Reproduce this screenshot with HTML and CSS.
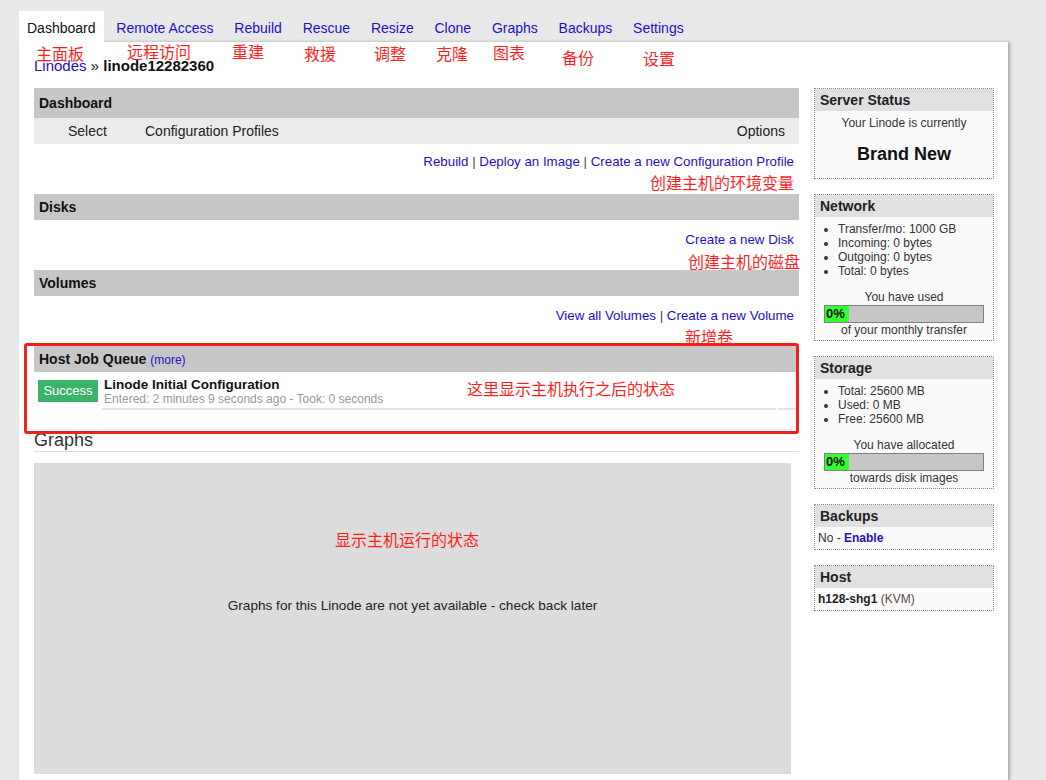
FILE: index.html
```html
<!DOCTYPE html>
<html lang="en">
<head>
<meta charset="utf-8">
<title>Linode Dashboard</title>
<link rel="stylesheet" href="styles.css">
</head>
<body>
<div class="page">
  <nav class="tabs">
    <a class="tab active">Dashboard</a>
    <a class="tab">Remote Access</a>
    <a class="tab">Rebuild</a>
    <a class="tab">Rescue</a>
    <a class="tab">Resize</a>
    <a class="tab">Clone</a>
    <a class="tab">Graphs</a>
    <a class="tab">Backups</a>
    <a class="tab">Settings</a>
  </nav>
  <div class="panel">
    <div class="crumbs"><a class="link">Linodes</a> » <b>linode12282360</b></div>
    <div class="cols">
      <main class="main">
        <section>
          <div class="sec-head tall">Dashboard</div>
          <div class="sub-head">
            <span class="col-select">Select</span>
            <span class="col-profiles">Configuration Profiles</span>
            <span class="col-options">Options</span>
          </div>
          <div class="links"><a class="link">Rebuild</a> <span class="sep">|</span> <a class="link">Deploy an Image</a> <span class="sep">|</span> <a class="link">Create a new Configuration Profile</a></div>
        </section>
        <section>
          <div class="sec-head">Disks</div>
          <div class="links low"><a class="link">Create a new Disk</a></div>
        </section>
        <section>
          <div class="sec-head">Volumes</div>
          <div class="links low"><a class="link">View all Volumes</a> <span class="sep">|</span> <a class="link">Create a new Volume</a></div>
        </section>
        <section>
          <div class="sec-head">Host Job Queue <a class="link more">(more)</a></div>
          <div class="job-row">
            <div class="job-status"><span class="badge">Success</span></div>
            <div class="job-info">
              <div class="job-title">Linode Initial Configuration</div>
              <div class="job-meta">Entered: 2 minutes 9 seconds ago - Took: 0 seconds</div>
            </div>
            <div class="job-end"></div>
          </div>
        </section>
        <h2 class="graphs-title">Graphs</h2>
        <div class="graph-box">Graphs for this Linode are not yet available - check back later</div>
      </main>
      <aside class="side">
        <div class="box">
          <div class="box-head">Server Status</div>
          <div class="box-body center">
            <div class="small">Your Linode is currently</div>
            <div class="status">Brand New</div>
          </div>
        </div>
        <div class="box">
          <div class="box-head">Network</div>
          <div class="box-body">
            <ul class="list">
              <li>Transfer/mo: 1000 GB</li>
              <li>Incoming: 0 bytes</li>
              <li>Outgoing: 0 bytes</li>
              <li>Total: 0 bytes</li>
            </ul>
            <div class="meter-label">You have used</div>
            <div class="bar"><div class="fill">0%</div></div>
            <div class="meter-foot">of your monthly transfer</div>
          </div>
        </div>
        <div class="box">
          <div class="box-head">Storage</div>
          <div class="box-body">
            <ul class="list">
              <li>Total: 25600 MB</li>
              <li>Used: 0 MB</li>
              <li>Free: 25600 MB</li>
            </ul>
            <div class="meter-label">You have allocated</div>
            <div class="bar"><div class="fill">0%</div></div>
            <div class="meter-foot">towards disk images</div>
          </div>
        </div>
        <div class="box">
          <div class="box-head">Backups</div>
          <div class="box-body line">No - <a class="link strong">Enable</a></div>
        </div>
        <div class="box">
          <div class="box-head">Host</div>
          <div class="box-body line"><b class="host">h128-shg1</b> <span class="kvm">(KVM)</span></div>
        </div>
      </aside>
    </div>
  </div>

  <div class="frame"></div>
  <span class="note n-dash">主面板</span>
  <span class="note n-remote">远程访问</span>
  <span class="note n-rebuild">重建</span>
  <span class="note n-rescue">救援</span>
  <span class="note n-resize">调整</span>
  <span class="note n-clone">克隆</span>
  <span class="note n-graphs">图表</span>
  <span class="note n-backup">备份</span>
  <span class="note n-settings">设置</span>
  <span class="note n-config">创建主机的环境变量</span>
  <span class="note n-disk">创建主机的磁盘</span>
  <span class="note n-vol">新增卷</span>
  <span class="note n-job">这里显示主机执行之后的状态</span>
  <span class="note n-graph">显示主机运行的状态</span>
</div>
</body>
</html>
```

FILE: styles.css
```css
* { box-sizing: border-box; }
html, body {
  margin: 0;
  padding: 0;
  background: #e8e8e8;
  font-family: "Liberation Sans", Arial, sans-serif;
  color: #222;
}
.page {
  position: relative;
  width: 1046px;
  min-height: 780px;
  padding-left: 19px;
  padding-top: 11px;
}
.link { color: #2211cc; text-decoration: none; cursor: pointer; }

/* tabs */
.tabs {
  display: flex;
  height: 31px;
}
.tab {
  display: block;
  height: 31px;
  padding: 0 8px;
  margin-right: 4.8px;
  font-size: 14px;
  line-height: 35px;
  color: #2211cc;
  white-space: nowrap;
}
.tab.active {
  background: #fff;
  color: #111;
}

/* panel */
.panel {
  width: 989px;
  min-height: 738px;
  background: #fff;
  box-shadow: 2px 0 3px rgba(0,0,0,0.28);
  padding: 15px 14px 7px 15px;
}
.crumbs {
  font-size: 15px;
  line-height: 18px;
  height: 18px;
  color: #111;
}
.cols {
  display: flex;
  gap: 15px;
  margin-top: 13px;
}
.main { width: 765px; }
.side { width: 180px; display: flex; flex-direction: column; gap: 15px; }

.sec-head {
  background: #c6c6c6;
  height: 26px;
  line-height: 26px;
  padding: 0 5px;
  font-size: 14px;
  font-weight: bold;
  color: #111;
}
.sec-head.tall { height: 30px; line-height: 30px; }
.more { font-weight: normal; font-size: 12px; }
.sub-head {
  display: flex;
  background: #ebebeb;
  height: 26px;
  line-height: 26px;
  font-size: 14px;
  color: #222;
}
.col-select { padding-left: 34px; width: 111px; }
.col-options { margin-left: auto; padding-right: 14px; }
.links {
  height: 50px;
  padding: 9px 5px 0 0;
  text-align: right;
  font-size: 13.3px;
  line-height: 18px;
}
.links.low { padding-top: 11px; }
.sep { color: #445; }

/* job queue */
.job-row { display: flex; }
.job-status { width: 68px; padding: 8px 4px; }
.badge {
  display: block;
  width: 60px;
  height: 22px;
  line-height: 22px;
  background: #3cb36a;
  color: #fff;
  text-align: center;
  font-size: 13px;
}
.job-info {
  width: 674px;
  padding: 5px 0 0 2px;
  border-bottom: 2px solid #e4e4e4;
}
.job-end {
  width: 19px;
  margin-left: 2px;
  border-bottom: 2px solid #e4e4e4;
}
.job-title { font-size: 13.5px; font-weight: bold; line-height: 15px; color: #111; }
.job-meta { font-size: 12px; line-height: 14px; color: #999; }

.graphs-title {
  margin: 19px 0 0;
  font-size: 18px;
  font-weight: normal;
  line-height: 22px;
  color: #333;
  border-bottom: 1px solid #ddd;
}
.graph-box {
  width: 757px;
  height: 311px;
  margin-top: 11px;
  background: #dcdcdc;
  text-align: center;
  font-size: 13.6px;
  line-height: 18px;
  padding-top: 134px;
  color: #222;
}

/* sidebar */
.box {
  border: 1px dotted #8a8a8a;
  background: #fafafa;
  color: #333;
}
.box-head {
  background: #e0e0e0;
  height: 22px;
  line-height: 22px;
  padding: 0 5px;
  font-size: 14px;
  font-weight: bold;
  color: #222;
}
.box-body { font-size: 12px; line-height: 14px; }
.center { text-align: center; padding: 5px 0 0; }
.small { font-size: 12px; line-height: 14px; }
.status {
  font-size: 18px;
  font-weight: bold;
  line-height: 22px;
  margin: 13px 0 13px;
  color: #111;
}
.list {
  margin: 5px 0 0;
  padding-left: 23px;
}
.list li { line-height: 14px; }
.meter-label { text-align: center; margin-top: 12px; }
.bar {
  margin: 1px 9px 0;
  height: 18px;
  border: 1px solid #808080;
  background: #c6c6c6;
}
.fill {
  width: 24px;
  height: 100%;
  background: #33ff33;
  font-size: 13px;
  font-weight: bold;
  line-height: 16px;
  color: #111;
  padding-left: 1px;
}
.meter-foot { text-align: center; padding-bottom: 3px; }
.line { padding: 4px 3px 4px; font-size: 12px; line-height: 14px; }
.strong { font-weight: bold; }
.host { color: #222; }
.kvm { color: #5a4a44; }

/* annotations */
.frame {
  position: absolute;
  left: 24px;
  top: 343px;
  width: 775px;
  height: 91px;
  border: 3px solid #f4211a;
  border-radius: 3px;
}
.note {
  position: absolute;
  font-family: "Noto Sans CJK SC", sans-serif;
  font-size: 16px;
  line-height: 16px;
  color: #ff1f1f;
  white-space: nowrap;
}
.n-dash { left: 36px; top: 45px; }
.n-remote { left: 127px; top: 43px; }
.n-rebuild { left: 232px; top: 43px; }
.n-rescue { left: 304px; top: 45px; }
.n-resize { left: 374px; top: 45px; }
.n-clone { left: 436px; top: 45px; }
.n-graphs { left: 493px; top: 44px; }
.n-backup { left: 562px; top: 49px; }
.n-settings { left: 643px; top: 50px; }
.n-config { left: 650px; top: 174px; }
.n-disk { left: 688px; top: 253px; }
.n-vol { left: 685px; top: 328px; }
.n-job { left: 467px; top: 380px; }
.n-graph { left: 335px; top: 531px; }
```
